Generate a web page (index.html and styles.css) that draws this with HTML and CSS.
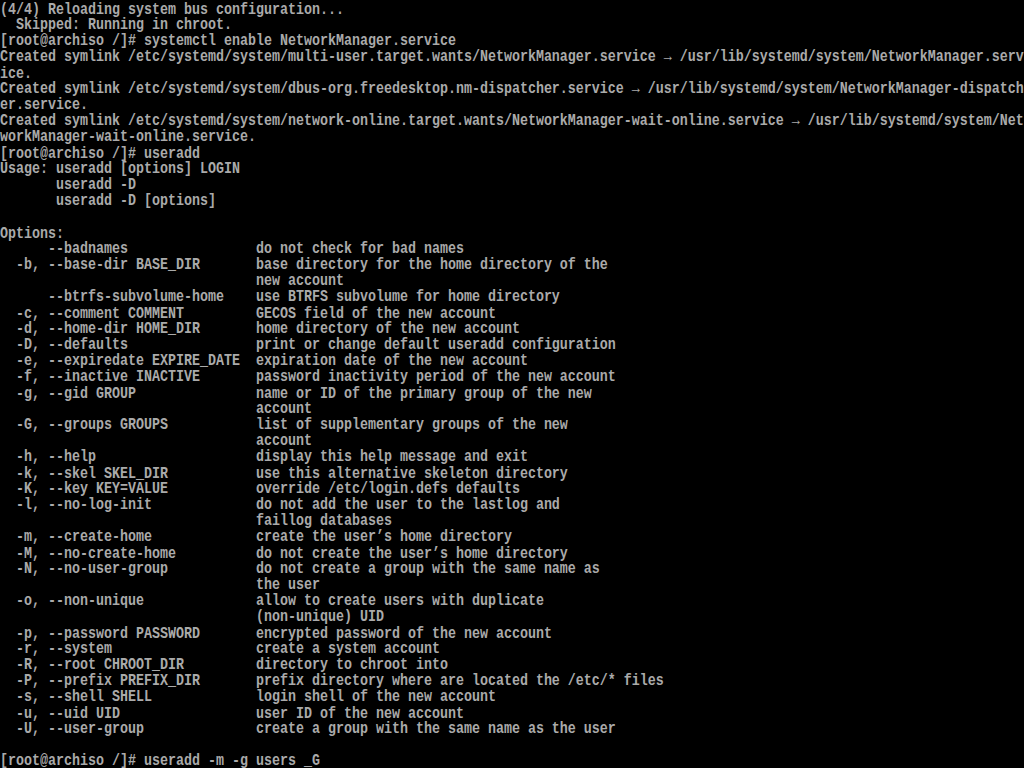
FILE: index.html
```html
<!DOCTYPE html>
<html>
<head>
<meta charset="utf-8">
<link rel="stylesheet" href="styles.css">
</head>
<body>
<div class="screen"><pre class="console">(4/4) Reloading system bus configuration...
  Skipped: Running in chroot.
[root@archiso /]# systemctl enable NetworkManager.service
Created symlink /etc/systemd/system/multi-user.target.wants/NetworkManager.service → /usr/lib/systemd/system/NetworkManager.serv
ice.
Created symlink /etc/systemd/system/dbus-org.freedesktop.nm-dispatcher.service → /usr/lib/systemd/system/NetworkManager-dispatch
er.service.
Created symlink /etc/systemd/system/network-online.target.wants/NetworkManager-wait-online.service → /usr/lib/systemd/system/Net
workManager-wait-online.service.
[root@archiso /]# useradd
Usage: useradd [options] LOGIN
       useradd -D
       useradd -D [options]

Options:
      --badnames                do not check for bad names
  -b, --base-dir BASE_DIR       base directory for the home directory of the
                                new account
      --btrfs-subvolume-home    use BTRFS subvolume for home directory
  -c, --comment COMMENT         GECOS field of the new account
  -d, --home-dir HOME_DIR       home directory of the new account
  -D, --defaults                print or change default useradd configuration
  -e, --expiredate EXPIRE_DATE  expiration date of the new account
  -f, --inactive INACTIVE       password inactivity period of the new account
  -g, --gid GROUP               name or ID of the primary group of the new
                                account
  -G, --groups GROUPS           list of supplementary groups of the new
                                account
  -h, --help                    display this help message and exit
  -k, --skel SKEL_DIR           use this alternative skeleton directory
  -K, --key KEY=VALUE           override /etc/login.defs defaults
  -l, --no-log-init             do not add the user to the lastlog and
                                faillog databases
  -m, --create-home             create the user’s home directory
  -M, --no-create-home          do not create the user’s home directory
  -N, --no-user-group           do not create a group with the same name as
                                the user
  -o, --non-unique              allow to create users with duplicate
                                (non-unique) UID
  -p, --password PASSWORD       encrypted password of the new account
  -r, --system                  create a system account
  -R, --root CHROOT_DIR         directory to chroot into
  -P, --prefix PREFIX_DIR       prefix directory where are located the /etc/* files
  -s, --shell SHELL             login shell of the new account
  -u, --uid UID                 user ID of the new account
  -U, --user-group              create a group with the same name as the user

[root@archiso /]# useradd -m -g users _G</pre></div>
</body>
</html>
```
FILE: styles.css
```css
html, body {
  margin: 0;
  padding: 0;
  background: #000;
}
.screen {
  width: 1024px;
  height: 768px;
  overflow: hidden;
  background: #000;
}
.console {
  margin: 0;
  padding: 1.5px 0 0 0;
  font-family: "Liberation Mono", "DejaVu Sans Mono", monospace;
  font-size: 13.333px;
  font-weight: bold;
  line-height: 12.8px;
  color: #aaaaaa;
  white-space: pre;
  transform: scaleY(1.25);
  transform-origin: 0 0;
}
```
